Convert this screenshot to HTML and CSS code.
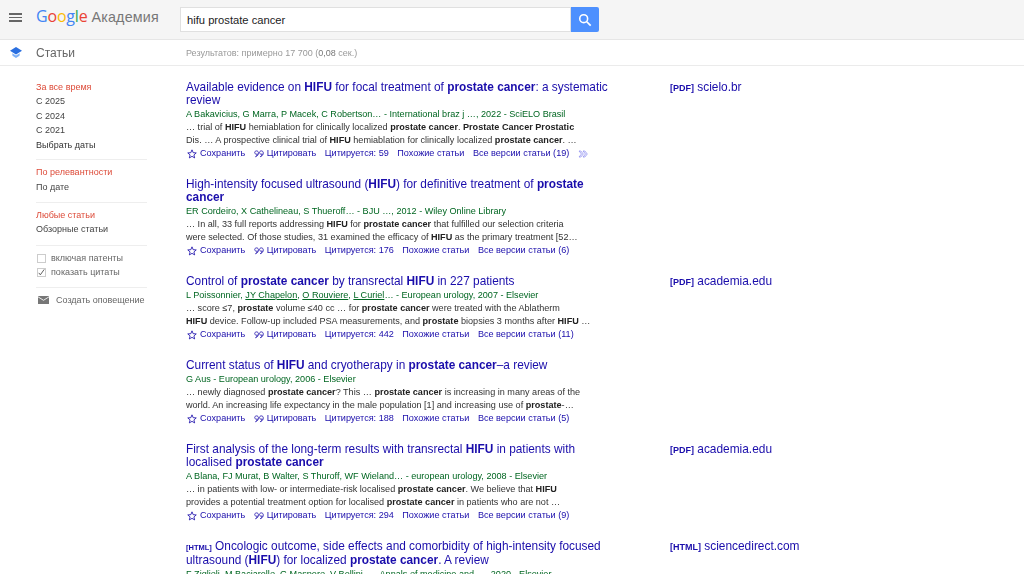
FILE: index.html
```html
<!DOCTYPE html>
<html lang="ru">
<head>
<meta charset="utf-8">
<title>Google Академия</title>
<link rel="stylesheet" href="styles.css">
</head>
<body>
<svg class="defs" width="0" height="0" aria-hidden="true">
  <defs>
    <symbol id="star" viewBox="0 0 12 12"><path d="M6 1l1.400 3.400 3.700.3-2.800 2.400.9 3.600L6 8.800l-3.200 1.900.9-3.600L.9 4.700l3.700-.3z" fill="none" stroke="#1a0dab" stroke-width="1"/></symbol>
    <symbol id="quote" viewBox="0 0 11 9"><path d="M2.700 1C1.500 1 .7 1.800.7 2.900s.8 1.800 1.900 1.800c.4 0 .8-.1 1-.3-.1 1.200-.8 2.300-2 3.100 2.300-.6 3.300-2.400 3.300-4.300C4.900 2 4.100 1 2.700 1zM8.100 1C6.900 1 6.100 1.800 6.100 2.900s.8 1.800 1.900 1.800c.4 0 .8-.1 1-.3-.1 1.200-.8 2.300-2 3.100 2.300-.6 3.300-2.400 3.300-4.300C10.300 2 9.500 1 8.100 1z" fill="none" stroke="#1a0dab" stroke-width=".9"/></symbol>
    <symbol id="chev" viewBox="0 0 10 8"><path d="M1 1l2.500 3L1 7h1.800l2.500-3-2.500-3zM5 1l2.500 3L5 7h1.800l2.500-3-2.500-3z" fill="none" stroke="#8f8ff0" stroke-width=".8"/></symbol>
  </defs>
</svg>
<header class="topbar">
  <div class="burger"><i></i><i></i><i></i></div>
  <div class="logo"><span class="g-b">G</span><span class="g-r">o</span><span class="g-y">o</span><span class="g-b">g</span><span class="g-g">l</span><span class="g-r">e</span><span class="logo-sub">Академия</span></div>
  <div class="search">
    <div class="search-input">hifu prostate cancer</div>
    <div class="search-btn"><svg width="14" height="14" viewBox="0 0 16 16"><circle cx="6.500" cy="6.500" r="4.500" fill="none" stroke="#fff" stroke-width="1.800"/><path d="M10 10l4.500 4.500" stroke="#fff" stroke-width="2"/></svg></div>
  </div>
</header>
<div class="subbar">
  <div class="cap"><svg width="12" height="11" viewBox="0 0 12 11"><path d="M6 0l6 3.800L6 7.600 0 3.800z" fill="#2a6fe0"/><path d="M2.200 6.200L6 8.600l3.800-2.400-.3 2.600L6 11 2.500 8.800z" fill="#7db0f7"/></svg></div>
  <div class="sub-title">Статьи</div>
  <div class="stats">Результатов: примерно 17 700 (<b>0,08</b> сек.)</div>
</div>
<div class="main">
  <aside class="side">
    <ul class="group">
      <li class="on">За все время</li>
      <li>С 2025</li>
      <li>С 2024</li>
      <li>С 2021</li>
      <li class="dark">Выбрать даты</li>
    </ul>
    <ul class="group">
      <li class="on">По релевантности</li>
      <li>По дате</li>
    </ul>
    <ul class="group articles">
      <li class="on">Любые статьи</li>
      <li>Обзорные статьи</li>
    </ul>
    <ul class="group checks">
      <li><span class="box"></span>включая патенты</li>
      <li><span class="box"><svg width="9" height="9" viewBox="0 0 9 9"><path d="M1 5l2 2.500L8 .5" fill="none" stroke="#555" stroke-width="1.200"/></svg></span>показать цитаты</li>
    </ul>
    <div class="alert"><svg width="11" height="8" viewBox="0 0 11 8"><path d="M0 0h11v8H0z" fill="#777"/><path d="M0 .8l5.500 3.500L11 .8" fill="none" stroke="#eee" stroke-width="1"/></svg>Создать оповещение</div>
  </aside>
  <section class="results">
    <article class="res">
      <div class="body">
        <h3>Available evidence on <b>HIFU</b> for focal treatment of <b>prostate cancer</b>: a systematic<br>review</h3>
        <div class="meta">A Bakavicius, G Marra, P Macek, C Robertson… - International braz j …, 2022 - SciELO Brasil</div>
        <div class="snip">… trial of <b>HIFU</b> hemiablation for clinically localized <b>prostate cancer</b>. <b>Prostate Cancer Prostatic</b><br>Dis. … A prospective clinical trial of <b>HIFU</b> hemiablation for clinically localized <b>prostate cancer</b>. …</div>
        <div class="acts"><svg class="star"><use href="#star"/></svg><span>Сохранить</span><svg class="quo"><use href="#quote"/></svg><span>Цитировать</span><span>Цитируется: 59</span><span>Похожие статьи</span><span>Все версии статьи (19)</span><svg class="more"><use href="#chev"/></svg></div>
      </div>
      <div class="src"><b>[PDF]</b> scielo.br</div>
    </article>
    <article class="res">
      <div class="body">
        <h3>High-intensity focused ultrasound (<b>HIFU</b>) for definitive treatment of <b>prostate</b><br><b>cancer</b></h3>
        <div class="meta">ER Cordeiro, X Cathelineau, S Thueroff… - BJU …, 2012 - Wiley Online Library</div>
        <div class="snip">… In all, 33 full reports addressing <b>HIFU</b> for <b>prostate cancer</b> that fulfilled our selection criteria<br>were selected. Of those studies, 31 examined the efficacy of <b>HIFU</b> as the primary treatment [52…</div>
        <div class="acts"><svg class="star"><use href="#star"/></svg><span>Сохранить</span><svg class="quo"><use href="#quote"/></svg><span>Цитировать</span><span>Цитируется: 176</span><span>Похожие статьи</span><span>Все версии статьи (6)</span></div>
      </div>
    </article>
    <article class="res">
      <div class="body">
        <h3>Control of <b>prostate cancer</b> by transrectal <b>HIFU</b> in 227 patients</h3>
        <div class="meta">L Poissonnier, <u>JY Chapelon</u>, <u>O Rouviere</u>, <u>L Curiel</u>… - European urology, 2007 - Elsevier</div>
        <div class="snip">… score ≤7, <b>prostate</b> volume ≤40 cc … for <b>prostate cancer</b> were treated with the Ablatherm<br><b>HIFU</b> device. Follow-up included PSA measurements, and <b>prostate</b> biopsies 3 months after <b>HIFU</b> …</div>
        <div class="acts"><svg class="star"><use href="#star"/></svg><span>Сохранить</span><svg class="quo"><use href="#quote"/></svg><span>Цитировать</span><span>Цитируется: 442</span><span>Похожие статьи</span><span>Все версии статьи (11)</span></div>
      </div>
      <div class="src"><b>[PDF]</b> academia.edu</div>
    </article>
    <article class="res">
      <div class="body">
        <h3>Current status of <b>HIFU</b> and cryotherapy in <b>prostate cancer</b>–a review</h3>
        <div class="meta">G Aus - European urology, 2006 - Elsevier</div>
        <div class="snip">… newly diagnosed <b>prostate cancer</b>? This … <b>prostate cancer</b> is increasing in many areas of the<br>world. An increasing life expectancy in the male population [1] and increasing use of <b>prostate</b>-…</div>
        <div class="acts"><svg class="star"><use href="#star"/></svg><span>Сохранить</span><svg class="quo"><use href="#quote"/></svg><span>Цитировать</span><span>Цитируется: 188</span><span>Похожие статьи</span><span>Все версии статьи (5)</span></div>
      </div>
    </article>
    <article class="res">
      <div class="body">
        <h3>First analysis of the long-term results with transrectal <b>HIFU</b> in patients with<br>localised <b>prostate cancer</b></h3>
        <div class="meta">A Blana, FJ Murat, B Walter, S Thuroff, WF Wieland… - european urology, 2008 - Elsevier</div>
        <div class="snip">… in patients with low- or intermediate-risk localised <b>prostate cancer</b>. We believe that <b>HIFU</b><br>provides a potential treatment option for localised <b>prostate cancer</b> in patients who are not …</div>
        <div class="acts"><svg class="star"><use href="#star"/></svg><span>Сохранить</span><svg class="quo"><use href="#quote"/></svg><span>Цитировать</span><span>Цитируется: 294</span><span>Похожие статьи</span><span>Все версии статьи (9)</span></div>
      </div>
      <div class="src"><b>[PDF]</b> academia.edu</div>
    </article>
    <article class="res">
      <div class="body">
        <h3><span class="tag">[HTML]</span> Oncologic outcome, side effects and comorbidity of high-intensity focused<br>ultrasound (<b>HIFU</b>) for localized <b>prostate cancer</b>. A review</h3>
        <div class="meta">F Ziglioli, M Baciarello, G Maspero, V Bellini… - Annals of medicine and …, 2020 - Elsevier</div>
      </div>
      <div class="src"><b>[HTML]</b> sciencedirect.com</div>
    </article>
  </section>
</div>
</body>
</html>
```
FILE: styles.css
```css
* { box-sizing: border-box; }
html, body { margin: 0; height: 100%; overflow: hidden; }
body { font-family: "Liberation Sans", Arial, sans-serif; background: #fff; color: #222; filter: blur(0.35px); }
ul { list-style: none; margin: 0; padding: 0; }
h3, b { margin: 0; }
.defs { position: absolute; }

.topbar { height: 40px; background: #f5f5f5; border-bottom: 1px solid #e6e6e6; display: flex; align-items: center; }
.burger { width: 36px; padding-left: 9px; margin-bottom: 4px; display: flex; flex-direction: column; gap: 2px; }
.burger i { display: block; width: 13px; height: 1.500px; background: #666; }
.logo { width: 144px; margin-bottom: 7px; font-size: 16px; font-family: "Open Sans", sans-serif; letter-spacing: -0.2px; display: flex; align-items: baseline; }
.g-b { color: #4285f4; } .g-r { color: #ea4335; } .g-y { color: #fbbc05; } .g-g { color: #34a853; }
.logo-sub { color: #777; margin-left: 4px; font-size: 14.300px; font-family: "Liberation Sans", sans-serif; letter-spacing: 0.2px; }
.search { display: flex; height: 25px; }
.search-input { width: 391px; background: #fff; border: 1px solid #e0e0e0; font-size: 11.200px; line-height: 24px; padding-left: 6px; color: #222; }
.search-btn { width: 28px; background: #4d90fe; display: flex; align-items: center; justify-content: center; border-radius: 0 2px 2px 0; }

.subbar { height: 26px; border-bottom: 1px solid #ebebeb; display: flex; align-items: center; }
.cap { width: 36px; padding-left: 10px; display: flex; }
.sub-title { width: 150px; font-size: 12px; color: #666; }
.stats { font-size: 9px; color: #999; }
.stats b { font-weight: normal; color: #777; }

.main { display: flex; padding-top: 14px; }
.side { width: 150px; margin-left: 36px; flex: none; font-size: 9px; color: #444; }
.side li { height: 14.400px; line-height: 14.400px; }
.side .on { color: #dd4b39; }
.side .dark { color: #333; }
.group { width: 111px; padding-bottom: 7.500px; margin-bottom: 5px; border-bottom: 1px solid #eeeeee; }
.articles { padding-bottom: 8.500px; }
.checks li { display: flex; align-items: center; color: #666; padding-left: 1px; }
.box { width: 9px; height: 9px; border: 1px solid #ccc; background: #fff; margin-right: 5px; display: flex; align-items: center; justify-content: center; }
.alert { display: flex; align-items: center; gap: 7px; padding-left: 2px; margin-top: 1px; color: #666; height: 14px; }

.results { flex: 1; padding-top: 1px; }
.res { display: flex; margin-bottom: 18px; }
.body { width: 484px; flex: none; }
h3 { font-size: 11.850px; line-height: 13px; font-weight: normal; color: #1a0dab; white-space: nowrap; }
h3 b { color: #1a0dab; }
.tag { font-size: 7.500px; font-weight: bold; }
.meta { font-size: 9.100px; line-height: 14px; color: #006621; }
.meta u { text-decoration: underline; }
.snip { font-size: 9.100px; line-height: 13px; color: #333; white-space: nowrap; }
.snip b { color: #222; }
.acts { display: flex; align-items: center; font-size: 9.100px; line-height: 13px; color: #1a0dab; }
.acts span { margin-right: 8.500px; }
.star { width: 10px; height: 10px; margin: 0 3px 0 1px; }
.quo { width: 10px; height: 8px; margin-right: 3px; }
.more { width: 10px; height: 8px; }
.src { font-size: 11.900px; color: #1a0dab; line-height: 13px; }
.src b { font-size: 9px; }
```
